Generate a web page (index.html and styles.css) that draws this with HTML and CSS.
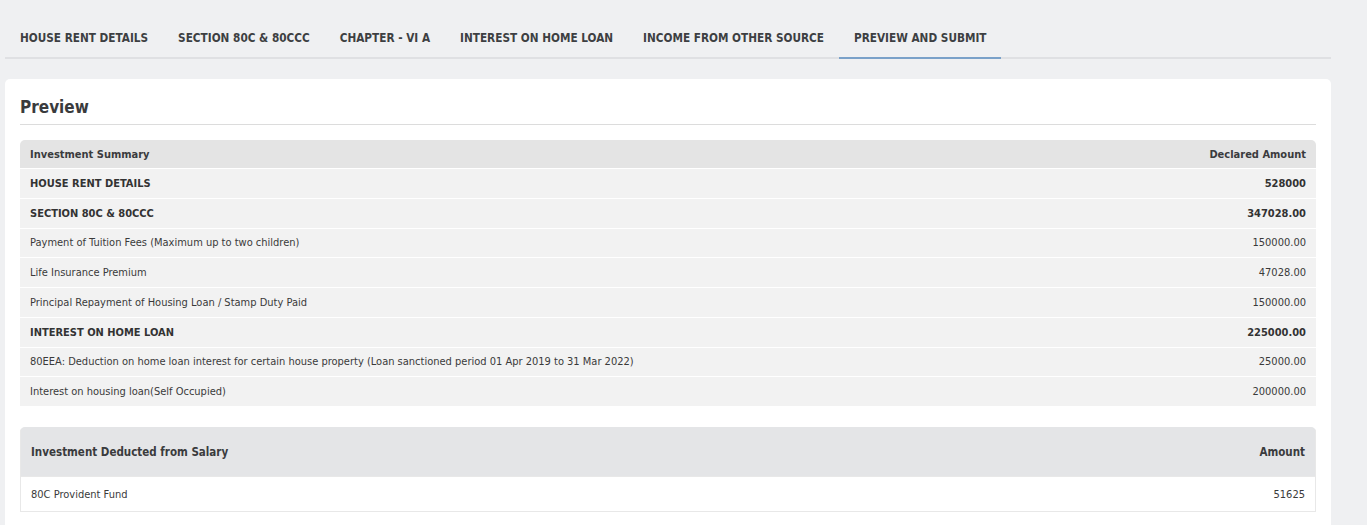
FILE: index.html
```html
<!DOCTYPE html>
<html>
<head>
<meta charset="utf-8">
<link rel="stylesheet" href="styles.css">
</head>
<body>
<div class="page">
  <nav class="tabs">
    <div class="tab">HOUSE RENT DETAILS</div>
    <div class="tab">SECTION 80C &amp; 80CCC</div>
    <div class="tab">CHAPTER - VI A</div>
    <div class="tab">INTEREST ON HOME LOAN</div>
    <div class="tab">INCOME FROM OTHER SOURCE</div>
    <div class="tab active">PREVIEW AND SUBMIT</div>
  </nav>
  <section class="card">
    <h2 class="title">Preview</h2>
    <div class="table summary">
      <div class="row head"><span>Investment Summary</span><span>Declared Amount</span></div>
      <div class="row bold"><span>HOUSE RENT DETAILS</span><span>528000</span></div>
      <div class="row bold"><span>SECTION 80C &amp; 80CCC</span><span>347028.00</span></div>
      <div class="row"><span>Payment of Tuition Fees (Maximum up to two children)</span><span>150000.00</span></div>
      <div class="row"><span>Life Insurance Premium</span><span>47028.00</span></div>
      <div class="row"><span>Principal Repayment of Housing Loan / Stamp Duty Paid</span><span>150000.00</span></div>
      <div class="row bold"><span>INTEREST ON HOME LOAN</span><span>225000.00</span></div>
      <div class="row"><span>80EEA: Deduction on home loan interest for certain house property (Loan sanctioned period 01 Apr 2019 to 31 Mar 2022)</span><span>25000.00</span></div>
      <div class="row"><span>Interest on housing loan(Self Occupied)</span><span>200000.00</span></div>
    </div>
    <div class="table salary">
      <div class="row head"><span>Investment Deducted from Salary</span><span>Amount</span></div>
      <div class="row"><span>80C Provident Fund</span><span>51625</span></div>
    </div>
  </section>
</div>
</body>
</html>
```

FILE: styles.css
```css
* { box-sizing: border-box; }
html, body { margin: 0; padding: 0; }
body {
  background: #eff0f2;
  font-family: "DejaVu Sans Condensed", "DejaVu Sans", sans-serif;
  color: #333;
  height: 525px;
  overflow: hidden;
}
.page { padding: 0 36px 0 5px; }
.tabs {
  display: flex;
  margin-top: 18px;
  border-bottom: 2px solid #dfe0e3;
  height: 41px;
}
.tab {
  padding: 0 15px;
  height: 41px;
  line-height: 40px;
  font-size: 11.7px;
  font-weight: bold;
  color: #3d3f42;
}
.tab.active {
  border-bottom: 2px solid #7aa1c9;
}
.card {
  margin-top: 20px;
  background: #fff;
  border-radius: 5px;
  padding: 16px 15px 20px 15px;
  min-height: 460px;
}
.title {
  margin: 0 0 15px 0;
  font-size: 17px;
  font-weight: bold;
  color: #3a3b3d;
  padding-bottom: 4px;
  border-bottom: 1px solid #dcdcdc;
  line-height: 25px;
}
.table { border-radius: 5px 5px 0 0; overflow: hidden; }
.row {
  display: flex;
  justify-content: space-between;
  align-items: center;
  padding: 0 10px;
  height: 29.75px;
  background: #f2f2f2;
  border-top: 1px solid #fff;
  font-size: 11px;
  color: #3a3a3a;
}
.row.head {
  background: #e4e4e4;
  border-top: 0;
  height: 28px;
  font-size: 11px;
  font-weight: bold;
  color: #3a3b3d;
}
.row.bold { font-size: 11px; font-weight: bold; color: #333; }
.salary { margin-top: 21px; }
.salary .row.head { height: 50px; background: #e4e5e7; font-size: 11.5px; }
.salary .row {
  background: #fff;
  height: 35px;
  border: 1px solid #e8e8e8;
  border-top: 0;
}
```
